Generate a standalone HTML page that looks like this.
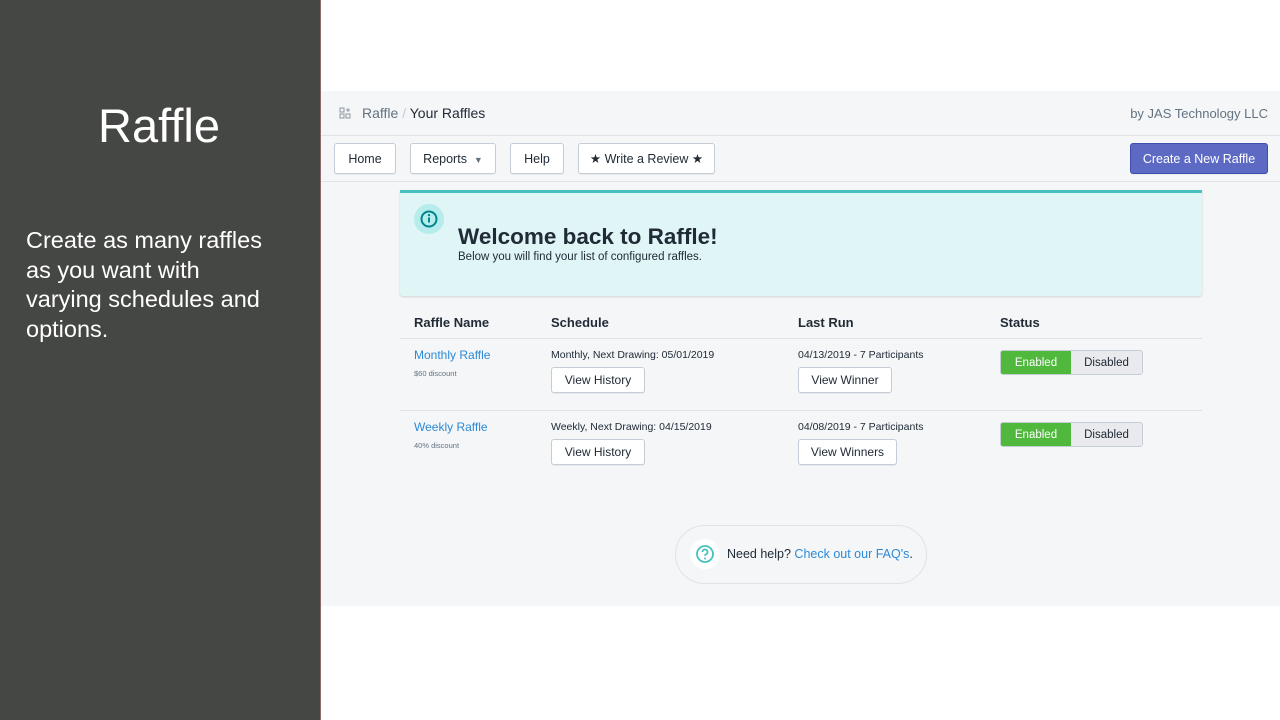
<!DOCTYPE html>
<html><head><style>
*{box-sizing:border-box;margin:0;padding:0}
body{width:1280px;height:720px;position:relative;background:#fff;font-family:"Liberation Sans",sans-serif;overflow:hidden;color:#212b36}
.side{position:absolute;left:0;top:0;width:321px;height:720px;background:#454744;border-right:1px solid #8a6a6a}
.side h1{position:absolute;left:0;width:318px;text-align:center;top:98px;font-weight:normal;color:#fff;font-size:47px}
.side p{position:absolute;left:26px;top:226px;width:290px;color:#fff;font-size:23.5px;line-height:29.5px;white-space:nowrap}
.app{position:absolute;left:321px;top:91px;width:959px;height:515px;background:#f4f6f8}
.top{position:absolute;left:0;top:0;width:959px;height:45px;border-bottom:1px solid #dfe3e8}
.bc{position:absolute;left:41px;top:14px;font-size:14px;color:#637381}
.bc b{font-weight:normal;color:#212b36}
.by{position:absolute;right:12px;top:15px;font-size:13px;color:#637381}
.bar{position:absolute;left:0;top:45px;width:959px;height:46px;border-bottom:1px solid #dfe3e8}
.btn{position:absolute;height:31px;background:#fff;border:1px solid #c4cdd5;border-radius:3px;font-size:12.5px;line-height:30px;text-align:center;color:#212b36;box-shadow:0 1px 0 rgba(22,29,37,.05)}
.prim{background:#5c6ac4;border-color:#3f4eae;color:#fff}
.banner{position:absolute;left:79px;top:99px;width:802px;height:106px;background:#e0f5f5;border-top:3px solid #47c1bf;box-shadow:0 1px 2px rgba(0,0,0,.15);border-radius:0 0 3px 3px}
.banner h2{position:absolute;left:58px;top:31px;font-size:22.5px}
.banner p{position:absolute;left:58px;top:58px;font-size:11.5px}
.ic{position:absolute;left:14px;top:11px;width:30px;height:30px;border-radius:50%;background:#b7ecec}
.th{position:absolute;top:224px;font-size:13px;font-weight:bold;color:#212b36}
.line{position:absolute;left:79px;width:802px;height:1px;background:#dfe3e8}
.t{position:absolute;font-size:10.5px;color:#212b36}
.lnk{position:absolute;font-size:12px;color:#2c8ad6}
.sm{position:absolute;font-size:7.5px;color:#637381}
.tog{position:absolute;width:143px;height:25px;border:1px solid #c4cdd5;border-radius:3px;font-size:11.5px;overflow:hidden;display:flex}
.tog span{flex:1;text-align:center;line-height:23px;padding-top:1px}
.tog .on{background:#50b83c;color:#fff;flex:0 0 70px}
.tog .off{background:#e8eaee}
.help{position:absolute;left:354px;top:434px;width:252px;height:59px;border:1px solid #dfe3e8;border-radius:30px;font-size:12.5px}
</style></head><body>
<div class="side"><h1>Raffle</h1><p>Create as many raffles<br>as you want with<br>varying schedules and<br>options.</p></div>
<div class="app">
<div class="top">
<svg style="position:absolute;left:18px;top:16px" width="12" height="12" viewBox="0 0 12 12" fill="none" stroke="#8c96a0" stroke-width="1"><rect x="1" y="1" width="4" height="4"/><rect x="1" y="7" width="4" height="4"/><rect x="7" y="7" width="4" height="4"/><path d="M9 1v4M7 3h4"/></svg>
<div class="bc">Raffle <span style="color:#c4cdd5">/</span> <b>Your Raffles</b></div>
<div class="by">by JAS Technology LLC</div></div>
<div class="bar">
<div class="btn" style="left:13px;top:7px;width:62px">Home</div>
<div class="btn" style="left:89px;top:7px;width:86px">Reports &nbsp;<span style="font-size:9px;color:#637381">▼</span></div>
<div class="btn" style="left:189px;top:7px;width:54px">Help</div>
<div class="btn" style="left:257px;top:7px;width:137px">★ Write a Review ★</div>
<div class="btn prim" style="left:809px;top:7px;width:138px">Create a New Raffle</div>
</div>
<div class="banner"><div class="ic"><svg width="30" height="30" viewBox="0 0 30 30"><circle cx="15" cy="15" r="7.5" fill="none" stroke="#00848e" stroke-width="2"/><rect x="14" y="13.5" width="2" height="5" fill="#00848e"/><circle cx="15" cy="11.2" r="1.2" fill="#00848e"/></svg></div><h2>Welcome back to Raffle!</h2><p>Below you will find your list of configured raffles.</p></div>
<div class="th" style="left:93px">Raffle Name</div><div class="th" style="left:230px">Schedule</div><div class="th" style="left:477px">Last Run</div><div class="th" style="left:679px">Status</div>
<div class="line" style="top:247px"></div>
<div class="lnk" style="left:93px;top:257px">Monthly Raffle</div><div class="sm" style="left:93px;top:278px">$60 discount</div>
<div class="t" style="left:230px;top:258px">Monthly, Next Drawing: 05/01/2019</div>
<div class="btn" style="left:230px;top:276px;width:94px;height:26px;line-height:25px;font-size:12px">View History</div>
<div class="t" style="left:477px;top:258px">04/13/2019 - 7 Participants</div>
<div class="btn" style="left:477px;top:276px;width:94px;height:26px;line-height:25px;font-size:12px">View Winner</div>
<div class="tog" style="left:679px;top:259px"><span class="on">Enabled</span><span class="off">Disabled</span></div>
<div class="line" style="top:319px"></div>
<div class="lnk" style="left:93px;top:329px">Weekly Raffle</div><div class="sm" style="left:93px;top:350px">40% discount</div>
<div class="t" style="left:230px;top:330px">Weekly, Next Drawing: 04/15/2019</div>
<div class="btn" style="left:230px;top:348px;width:94px;height:26px;line-height:25px;font-size:12px">View History</div>
<div class="t" style="left:477px;top:330px">04/08/2019 - 7 Participants</div>
<div class="btn" style="left:477px;top:348px;width:99px;height:26px;line-height:25px;font-size:12px">View Winners</div>
<div class="tog" style="left:679px;top:331px"><span class="on">Enabled</span><span class="off">Disabled</span></div>
<div class="help"><div style="position:absolute;left:14px;top:13px;width:30px;height:30px;border-radius:50%;background:#fff"><svg width="30" height="30" viewBox="0 0 30 30"><circle cx="15" cy="15" r="8" fill="none" stroke="#47c1bf" stroke-width="1.8"/><path d="M12.5 13a2.5 2.5 0 1 1 3.5 2.3c-.7.3-1 .8-1 1.5" fill="none" stroke="#47c1bf" stroke-width="1.8"/><circle cx="15" cy="19.5" r="1" fill="#47c1bf"/></svg></div><div style="position:absolute;left:51px;top:21px">Need help? <span style="color:#2c8ad6">Check out our FAQ's</span>.</div></div>
</div>
</body></html>
